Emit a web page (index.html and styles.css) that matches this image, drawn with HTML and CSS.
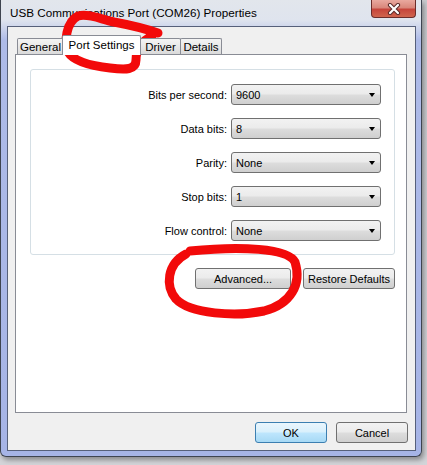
FILE: index.html
```html
<!DOCTYPE html>
<html>
<head>
<meta charset="utf-8">
<link rel="stylesheet" href="styles.css">
</head>
<body>
<div class="window">
  <div class="titlebar">
    <span class="title">USB Communications Port (COM26) Properties</span>
    <div class="close">
      <svg width="16" height="12" viewBox="0 0 16 12">
        <path d="M4 2 L12 10 M12 2 L4 10" stroke="#5a2a28" stroke-width="4.2" stroke-linecap="round"/>
        <path d="M4 2 L12 10 M12 2 L4 10" stroke="#ffffff" stroke-width="2.2" stroke-linecap="round"/>
      </svg>
    </div>
  </div>
  <div class="client">
    <div class="tabs">
      <div class="tab t-general">General</div>
      <div class="tab active">Port Settings</div>
      <div class="tab t-driver">Driver</div>
      <div class="tab t-details">Details</div>
    </div>
    <div class="panel">
      <div class="group">
        <span class="label">Bits per second:</span>
        <div class="combo"><span>9600</span><span class="arrow"></span></div>
        <span class="label">Data bits:</span>
        <div class="combo"><span>8</span><span class="arrow"></span></div>
        <span class="label">Parity:</span>
        <div class="combo"><span>None</span><span class="arrow"></span></div>
        <span class="label">Stop bits:</span>
        <div class="combo"><span>1</span><span class="arrow"></span></div>
        <span class="label">Flow control:</span>
        <div class="combo"><span>None</span><span class="arrow"></span></div>
      </div>
      <div class="panel-buttons">
        <div class="btn adv">Advanced...</div>
        <div class="btn restore">Restore Defaults</div>
      </div>
    </div>
    <div class="dialog-buttons">
      <div class="btn dlg default">OK</div>
      <div class="btn dlg">Cancel</div>
    </div>
  </div>
  <svg class="annot" width="427" height="465" viewBox="0 0 427 465">
    <path d="M158 33 C 146 29, 130 25, 114 22 C 100 19, 88 13, 78 16 C 66 22, 64 42, 68 52 C 74 62, 92 66, 110 68 C 126 70, 136 70, 136 60 C 136 50, 140 42, 152 36" fill="none" stroke="#f20a0a" stroke-width="9" stroke-linecap="round" stroke-linejoin="round"/>
    <path d="M190 251 C 240 246, 288 248, 295 262 C 302 284, 291 304, 264 311 C 236 317, 190 314, 176 299 C 165 286, 167 264, 186 254" fill="none" stroke="#f20a0a" stroke-width="9" stroke-linecap="round" stroke-linejoin="round"/>
  </svg>
</div>
</body>
</html>
```

FILE: styles.css
```css
html, body {
  margin: 0;
  padding: 0;
}
body {
  width: 427px;
  height: 465px;
  background: linear-gradient(180deg, #c9cbcf 0%, #d3d4d8 100%);
  font-family: "Liberation Sans", Arial, sans-serif;
  font-size: 11px;
  color: #000;
  overflow: hidden;
}
.window {
  position: relative;
  width: 422px;
  height: 457px;
  box-sizing: border-box;
  border: 1px solid #3e4450;
  border-top: none;
  border-radius: 0 0 6px 6px;
  background: linear-gradient(180deg, #e2e6ec 0px, #dfe4ee 20px, #aebbe8 40px, #a6b4e6 100%);
  display: flex;
  flex-direction: column;
  box-shadow: 2px 3px 5px rgba(0,0,0,0.35);
}
.titlebar {
  height: 26px;
  display: flex;
  align-items: flex-start;
  flex-shrink: 0;
}
.title {
  font-size: 11.7px;
  padding: 6px 0 0 9px;
  color: #000;
}
.close {
  margin-left: auto;
  margin-right: 5px;
  width: 45px;
  height: 18px;
  box-sizing: border-box;
  border: 1px solid #6b2d2a;
  border-top: none;
  border-radius: 0 0 4px 4px;
  background: linear-gradient(180deg, #e9a99f 0%, #d9877b 45%, #c6453b 55%, #d0654e 100%);
  display: flex;
  align-items: center;
  justify-content: center;
}
.client {
  margin: 0 5px 0 6px;
  height: 425px;
  box-sizing: border-box;
  border: 1px solid #56607a;
  background: #f0f0f0;
  display: flex;
  flex-direction: column;
}
.tabs {
  display: flex;
  align-items: flex-end;
  height: 19px;
  margin-top: 8px;
  padding-left: 9px;
  position: relative;
  z-index: 1;
}
.tab {
  height: 16px;
  box-sizing: border-box;
  border: 1px solid #898c95;
  border-bottom: none;
  border-radius: 2px 2px 0 0;
  background: linear-gradient(180deg, #f4f4f4 0%, #e8e8e8 50%, #dadada 100%);
  padding-top: 1px;
  line-height: 14px;
  text-align: center;
  white-space: nowrap;
  font-size: 11.5px;
}
.tab + .tab {
  margin-left: -1px;
}
.t-general {
  width: 47px;
}
.t-driver {
  width: 41px;
}
.t-details {
  width: 42px;
}
.tab.active {
  width: 79px;
  height: 20px;
  margin: 0 0 -1px -2px;
  background: #fff;
  padding-top: 2px;
  line-height: 15px;
  position: relative;
  z-index: 2;
}
.panel {
  margin: 0 8px 0 7px;
  height: 359px;
  box-sizing: border-box;
  border: 1px solid #898c95;
  background: #fff;
  display: flex;
  flex-direction: column;
}
.group {
  margin: 14px 11px 0 14px;
  height: 186px;
  box-sizing: border-box;
  border: 1px solid #d5dfe5;
  border-radius: 3px;
  display: grid;
  grid-template-columns: 1fr 150px;
  grid-auto-rows: 21px;
  column-gap: 4px;
  row-gap: 13px;
  padding: 14px 13px 0 0;
  align-items: center;
}
.label {
  text-align: right;
  white-space: nowrap;
}
.combo {
  height: 21px;
  box-sizing: border-box;
  border: 1px solid #707070;
  border-radius: 3px;
  background: linear-gradient(180deg, #f2f2f2 0%, #ebebeb 48%, #dddddd 52%, #cfcfcf 100%);
  display: flex;
  align-items: center;
  padding: 0 4px 0 4px;
}
.combo span:first-child {
  flex: 1;
}
.arrow {
  width: 0;
  height: 0;
  border-left: 3.5px solid transparent;
  border-right: 3.5px solid transparent;
  border-top: 4px solid #000;
  margin-right: 1px;
}
.panel-buttons {
  display: flex;
  justify-content: flex-end;
  gap: 12px;
  margin-top: 13px;
  padding-right: 11px;
}
.btn {
  height: 21px;
  box-sizing: border-box;
  border: 1px solid #707070;
  border-radius: 3px;
  background: linear-gradient(180deg, #f2f2f2 0%, #ebebeb 48%, #dddddd 52%, #cfcfcf 100%);
  display: flex;
  align-items: center;
  justify-content: center;
  white-space: nowrap;
}
.btn.adv {
  width: 96px;
}
.btn.restore {
  width: 92px;
}
.dialog-buttons {
  display: flex;
  justify-content: flex-end;
  gap: 9px;
  margin-top: 9px;
  padding-right: 7px;
}
.btn.dlg {
  width: 72px;
}
.btn.default {
  border-color: #3c7fb1;
  background: linear-gradient(180deg, #eaf6fd 0%, #d9f0fc 48%, #bee6fd 52%, #a7d9f5 100%);
}
.annot {
  position: absolute;
  left: -1px;
  top: 0;
  pointer-events: none;
}
```
